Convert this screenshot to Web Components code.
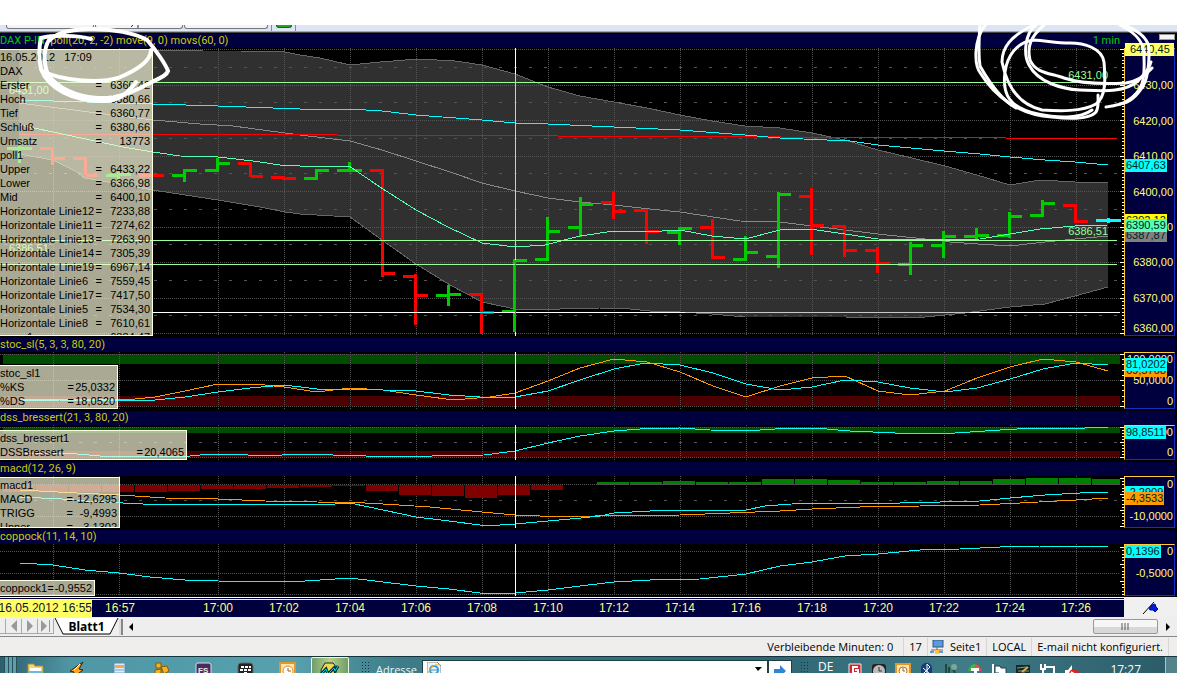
<!DOCTYPE html>
<html lang="de">
<head>
<meta charset="utf-8">
<title>DAX 1 min</title>
<style>
html, body {
  margin: 0;
  height: 100%;
  overflow: hidden;
  background: #fff;
  font-family: "Liberation Sans", Arial, sans-serif;
  font-size: 11px;
}
</style>
</head>
<body>
<trading-desk></trading-desk>

<script>
const CYAN = "#00ffff", ORANGE = "#ff9900", MINT = "#55ffb4", LIME = "#99ff99";

// x of the vertical grid lines
const GRID_X = [53, 119];
for (let x = 218; x < 1100; x += 66) GRID_X.push(x);

const hline = (y, style) => `<path class="${style}" d="M0 ${y + .5}H1120"/>`;
const poly = (color, pts) => `<polyline fill="none" stroke="${color}" points="${pts}"/>`;
const rect = (x, y, w, h, c) => `<rect x="${x}" y="${y}" width="${w}" height="${h}" fill="${c}"/>`;
const ticks = (from, to, count, major) => {
  let out = "";
  for (let i = 0; i <= count; i++) {
    const y = Math.round(from + (to - from) * i / count);
    const w = i % major ? 2 : 4;
    out += rect(1124 - w, y, w, 1, "#fff");
  }
  return out;
};
const grid = (top, bottom) => GRID_X.map(x => `<path class="dot" d="M${x + .5} ${top}V${bottom}"/>`).join("");

// x, high, low, open, close
const BARS = [
  ["g",20,146,163,148,148],["r",53,148,165,148,158],["r",86,157,175,158,175],["g",119,172,180,175,174],
  ["r",152,174,177,175,175],["g",185,169,182,175,170],["g",218,158,172,170,163],["r",251,162,177,163,176],
  ["r",284,176,180,177,178],["g",317,169,180,178,170],["g",350,162,172,170,170],["r",383,169,277,170,273],
  ["r",416,274,325,276,295],["g",449,285,306,295,294],["r",482,293,334,294,312],["g",515,259,332,311,260],
  ["g",548,217,261,259,231],["g",581,197,237,227,204],["r",614,191,219,202,211],["r",647,209,244,210,231],
  ["g",680,227,245,232,228],["r",713,219,259,227,257],["g",746,236,261,259,252],["g",779,192,268,256,194],
  ["r",812,188,255,196,225],["r",845,225,257,226,250],["r",878,247,273,250,263],["g",911,242,275,264,245],
  ["g",944,231,258,245,236],["g",977,228,240,236,235],["g",1010,212,238,235,216],["g",1043,200,217,215,203],
  ["r",1076,204,223,205,221],["c",1109,218,223,220,220]
];
const BAR_COLOR = { g: "#00cc00", r: "#ff0000", c: "#00ffff" };
const ohlc = BARS.map(([k, x, hi, lo, o, c]) =>
  rect(x - 2, hi, 3, lo - hi, BAR_COLOR[k]) +
  rect(x - 13, o - 1, 12, 3, BAR_COLOR[k]) +
  rect(x, c - 1, 12, 3, BAR_COLOR[k])).join("");

const UPPER = "19,49 153,50 203,51 240,51 285,52 300,55 320,58 350,65 380,62 418,59 455,61 482,65 515,74 548,87 580,96 614,102 647,108 680,115 712,121 745,126 780,128 812,133 845,140 878,150 912,158 945,166 977,175 1010,185 1040,180 1075,182 1108,182";
const LOWER = "1108,287 1075,296 1045,304 1010,307 965,313 945,315 925,317 895,318 845,317 745,317 712,314 680,312 650,311 620,308 600,308 560,309 515,309 482,302 450,285 416,264 382,240 350,217 300,214 285,212 260,207 218,200 185,195 153,190 85,178 77,172 53,160 19,154";

let histogram = "";
[492,492,492,492,492,491,489,489,488,487,486,491,495,496,498,495,490].forEach((y, i) => {
  histogram += rect(3 + i * 33, 485, 32, y - 485, "#800000");
});
[482,482,481,482,482,479,479,480,482,482,481,481,479,478,478,479].forEach((y, i) => {
  histogram += rect(597 + i * 33, y, i == 15 ? 28 : 32, 485 - y, "#008000");
});

const PLOTS = {
  price: {
    top: 48, height: 288,
    art: `<polygon fill="#303030" points="${UPPER} ${LOWER}"/>` + grid(48, 336) +
      [49,85,120,156,191,227,262,298,333].map(y => hline(y, "dot")).join("") +
      [67,102,138,173,209,244,280,315].map(y => hline(y, "dash")).join("") +
      poly("#666", UPPER) + poly("#666", LOWER) +
      poly("#888", "19,103 97,113 153,120 200,124 233,126 300,135 350,141 382,150 416,161 450,172 482,183 515,191 548,198 580,202 614,205 650,209 680,212 740,221 780,222 812,226 845,230 878,234 925,239 950,242 978,244 1010,246 1045,242 1075,239 1108,236") +
      ohlc +
      rect(153, 312, 967, 1, "#fff") + rect(685, 312, 285, 1, "#c8c8c8") + rect(480, 312, 14, 1, "#00ffff") +
      poly("#ff0000", "19,134 336,134 337,135 557,135 558,136 780,136 781,137 1005,137 1006,138 1117,138") +
      poly(CYAN, "19,100 153,104 218,106 300,109 350,109 382,111 416,115 482,120 515,123 548,124 614,127 680,130 745,135 780,138 850,141 878,145 944,151 980,154 1010,157 1045,160 1075,162 1108,165") +
      poly(MINT, "20,125 67,135 123,147 153,152 180,156 218,157 253,161 280,165 300,166 349,166 383,189 416,210 448,227 482,243 515,247 545,245 580,236 614,231 662,231 680,230 712,236 745,239 780,230 810,229 845,234 878,239 940,240 980,239 1010,234 1040,229 1075,226 1108,225") +
      rect(0, 82, 1117, 1, LIME) + rect(0, 240, 1117, 1, LIME) + rect(0, 264, 1117, 1, LIME) +
      rect(515, 48, 1, 288, "#fff") + rect(515, 74, 1, 185, "#ccc") + rect(515, 260, 1, 72, "#c3c") +
      ticks(49, 333, 80, 10)
  },
  stoc: {
    top: 352, height: 57,
    art: rect(3, 354, 1117, 10, "#004d00") + rect(3, 396, 1117, 10, "#4d0000") + grid(352, 409) +
      hline(354, "dot") + hline(380, "dot") + hline(406, "dot") +
      poly(ORANGE, "20,399 60,399 135,399 155,397 185,391 218,384 255,384 284,387 317,392 350,388 383,390 416,395 446,399 465,399 490,397 515,393 548,381 580,368 614,359 647,362 680,372 713,386 746,397 780,386 812,378 845,376 878,391 910,395 945,391 977,378 1010,367 1043,359 1076,362 1108,371") +
      poly(CYAN, "20,401 60,400 155,400 185,397 218,392 250,388 284,385 317,389 350,389 383,390 416,391 449,395 480,397 515,397 548,391 580,380 614,369 645,363 680,365 713,373 746,384 780,390 812,387 845,380 878,382 910,388 945,392 977,388 1010,379 1043,369 1076,363 1108,365") +
      rect(515, 352, 1, 57, "#fff") + ticks(354, 406, 10, 5)
  },
  dss: {
    top: 425, height: 35,
    art: rect(3, 427, 1117, 6, "#004d00") + rect(3, 451, 1117, 6, "#4d0000") + grid(425, 460) +
      hline(427, "dot") + hline(442, "dash") + hline(457, "dot") +
      poly(CYAN, "20,453 77,454 100,456 190,456 210,454 230,454 265,456 300,454 366,456 432,456 484,455 515,451 548,443 580,436 614,431 640,429 680,428 710,430 745,431 790,428 815,428 850,431 895,433 955,433 1000,430 1035,428 1085,428 1108,427") +
      rect(515, 425, 1, 35, "#fff") + ticks(427, 457, 10, 5)
  },
  macd: {
    top: 476, height: 52,
    art: grid(476, 528) + histogram + hline(484, "dot") + hline(500, "dash") + hline(516, "dot") +
      poly(ORANGE, "20,490 77,493 120,495 165,498 218,499 265,501 317,502 365,503 383,504 430,507 482,512 515,515 540,516 595,516 680,515 730,513 780,511 812,509 860,507 920,506 980,505 1020,503 1076,500 1108,498") +
      poly(CYAN, "20,497 62,499 85,501 123,503 143,504 335,504 350,503 383,510 416,517 449,521 480,525 500,525 515,524 548,521 581,518 600,516 614,513 650,511 680,510 746,510 765,506 805,503 900,503 980,501 1010,498 1045,495 1080,493 1108,492") +
      rect(515, 476, 1, 52, "#fff") + ticks(478, 526, 15, 5)
  },
  coppock: {
    top: 544, height: 52,
    art: grid(544, 596) + hline(551, "dot") + hline(573, "dot") + hline(594, "dot") +
      poly(CYAN, "20,563 53,565 85,570 119,573 150,577 185,580 218,581 290,582 350,578 383,582 416,586 449,589 480,593 515,593 548,590 580,586 614,582 650,580 700,579 746,574 780,566 812,562 845,556 878,554 920,550 960,549 1000,547 1040,546 1108,546") +
      rect(515, 544, 1, 52, "#fff") + ticks(547, 594, 14, 5)
  }
};

class PlotArea extends HTMLElement {
  connectedCallback() {
    const p = PLOTS[this.getAttribute("name")];
    this.attachShadow({ mode: "open" }).innerHTML = `
    <style>
      :host { display: block; position: relative; overflow: hidden; background: #000; min-width: 0; min-height: 0; }
      svg { display: block; width: 100%; height: 100%; shape-rendering: crispEdges; }
      .dot { stroke: #555; stroke-dasharray: 1 1; }
      .dash { stroke: #555; stroke-dasharray: 3 12; stroke-dashoffset: -4; }
    </style>
    <svg viewBox="0 ${p.top} 1124 ${p.height}" preserveAspectRatio="none" aria-hidden="true">${p.art}</svg>
    <slot></slot>`;
  }
}
customElements.define("plot-area", PlotArea);

// value read-out that floats over a plot
class DataBox extends HTMLElement {
  connectedCallback() {
    const rows = this.getAttribute("rows").split("|").map(row => {
      const [name, value] = row.split("=");
      return value
        ? `<tr><th scope="row">${name}</th><td>=</td><td class="val">${value}</td></tr>`
        : `<tr><th colspan="3">${name}</th></tr>`;
    }).join("");
    this.attachShadow({ mode: "open" }).innerHTML = `
    <style>
      :host {
        display: block; position: absolute; left: 0; bottom: 0; overflow: hidden; box-sizing: border-box;
        background: rgba(250, 250, 218, .68); color: #000;
        border: solid #ffffe4; border-width: 1px 1px 1px 0;
      }
      table { width: 100%; border-collapse: collapse; }
      th, td { padding: 0; height: 14px; line-height: 14px; font-weight: normal; text-align: left; white-space: pre; }
      th { width: 100%; }
      .val { text-align: right; padding-right: 2px; min-width: var(--val, 41px); }
    </style>
    <table>${rows}</table>`;
  }
}
customElements.define("data-box", DataBox);

class PriceTag extends HTMLElement {
  connectedCallback() {
    this.attachShadow({ mode: "open" }).innerHTML = `
    <style>
      :host {
        display: block; position: absolute; left: 0; height: 13px; line-height: 13px;
        padding: 0 1px; color: #002222; background: var(--tag, #00ffff); white-space: nowrap;
      }
    </style>
    <slot></slot>`;
  }
}
customElements.define("price-tag", PriceTag);

class PriceAxis extends HTMLElement {
  connectedCallback() {
    const marks = this.getAttribute("marks").split("|").map(m => `<span>${m}</span>`).join("");
    this.attachShadow({ mode: "open" }).innerHTML = `
    <style>
      :host {
        display: flex; position: relative; box-sizing: border-box; margin-right: 2px; background: #00003f;
        border: 1px solid #1030c8; border-top-color: #ffcc33; border-left-color: #ffcc33;
      }
      .scale { flex: 1; display: flex; flex-direction: column; justify-content: space-between; text-align: right; color: #ffff77; padding: var(--pad, 0); }
      span { display: block; line-height: 13px; padding-right: 1px; }
      :host([long]) .scale { padding-top: 19px; }
      :host([long]) span { display: flex; flex: 71; align-items: center; justify-content: flex-end; }
      :host([long]) span:last-child { flex: 38; align-items: flex-end; }
    </style>
    <div class="scale">${marks}</div>
    <slot></slot>`;
  }
}
customElements.define("price-axis", PriceAxis);

class ChartPane extends HTMLElement {
  connectedCallback() {
    this.attachShadow({ mode: "open" }).innerHTML = `
    <style>
      :host { display: grid; grid-template: 14px minmax(0, 1fr) / minmax(0, 1fr) 53px; background: #000; }
      header {
        grid-column: 1 / -1; display: flex; align-items: center; background: #00003f; color: #cccc00;
        margin-right: 2px; line-height: 14px; white-space: pre; font-family: Roboto, sans-serif;
      }
      header slot { display: contents; }
    </style>
    <header><slot name="title"></slot></header>
    <slot></slot>`;
  }
}
customElements.define("chart-pane", ChartPane);

class TimeAxis extends HTMLElement {
  connectedCallback() {
    let cells = "";
    for (let m = 0; m <= 26; m += 2) cells += `<span>17:${String(m).padStart(2, "0")}</span>`;
    this.attachShadow({ mode: "open" }).innerHTML = `
    <style>
      :host { display: grid; grid-template-columns: minmax(0, 1fr) 53px; height: 20px; background: #f0f0f0; font-size: 12px; }
      .times {
        display: grid; grid-template-columns: 92fr 56fr 37fr repeat(14, 66fr) 15fr;
        background: #00003f; color: #ffff77; border-top: 1px solid #fff; border-bottom: 1px solid #000; line-height: 17px;
      }
      span { border-top: 1px solid #ffff77; margin-top: 1px; text-align: center; white-space: nowrap; min-width: 0; }
      .date { background: #ffff66; color: #113; text-align: right; direction: rtl; overflow: hidden; }
      .date bdi { direction: ltr; }
      .pin { display: grid; place-items: center; }
    </style>
    <div class="times"><span class="date"><bdi>16.05.2012 16:55</bdi></span><span>16:57</span><span></span>${cells}<span></span></div>
    <div class="pin"><svg width="18" height="16" aria-hidden="true">
      <path d="M1 14L12 2M9 5l6 6" stroke="#000" fill="none"/>
      <path d="M10 5l3-1 1 3 2 2-3 3-2-2-3 0-1-2z" fill="#0018ee" stroke="#001080"/>
    </svg></div>`;
  }
}
customElements.define("time-axis", TimeAxis);

class ToolStrip extends HTMLElement {
  connectedCallback() {
    this.attachShadow({ mode: "open" }).innerHTML = `
    <style>
      :host { display: flex; height: 6px; background: #dde4f4; border-bottom: 1px solid #a9a9ad; box-shadow: 0 1px #444; padding-left: 6px; margin-bottom: 1px; overflow: hidden; }
      button { box-sizing: border-box; width: 88px; height: 4px; padding: 0; margin-right: 1px; background: #f4f4f4; border: 1px solid #777; border-top: 0; border-radius: 0 0 3px 3px; }
      button:nth-of-type(3) { width: 84px; }
      i { width: 1px; background: #889; margin: 0 4px 0 2px; }
      .go { width: 16px; height: 3px; border-color: #063; background: #1fa81f; }
      svg { display: block; margin-left: 34px; }
    </style>
    <button aria-label="Instrument"></button>
    <button aria-label="Typ"><svg width="12" height="3"><path d="M1 2l2-2M8 0v3" stroke="#333"/></svg></button>
    <button aria-label="Periode"></button>
    <i></i><button class="go" aria-label="Start"></button><i></i>`;
  }
}
customElements.define("tool-strip", ToolStrip);

class SheetTabs extends HTMLElement {
  connectedCallback() {
    this.attachShadow({ mode: "open" }).innerHTML = `
    <style>
      :host { display: flex; align-items: center; height: 20px; background: #eeeeee; border-bottom: 1px solid #888; box-sizing: border-box; font-family: "Noto Sans", "Open Sans", sans-serif; }
      button { font: inherit; padding: 0; border: 0; background: none; color: #222; }
      .nav { width: 16px; height: 15px; border-right: 1px solid #aaa; border-bottom: 1px solid #aaa; }
      .nav.first { width: 6px; }
      .nav svg { display: block; margin: auto; fill: #999; }
      .tab { position: relative; width: 65px; height: 18px; font-size: 12px; font-weight: bold; line-height: 16px; color: #000; }
      .tab svg { position: absolute; left: 0; top: 0; }
      .tab span { position: relative; }
      .split { width: 2px; height: 16px; background: #ddd; border-right: 2px solid #888; }
      .arrow { width: 16px; height: 16px; }
      .arrow svg { display: block; margin: auto; }
      .track { flex: 1; display: flex; justify-content: flex-end; background: #eeeeee; }
      .thumb { width: 65px; height: 15px; border: 1px solid #999; border-radius: 2px; background: linear-gradient(#f6f6f6 50%, #d8d8d8 50%); }
      .thumb svg { display: block; margin: auto; }
    </style>
    <button class="nav first" aria-label="Erstes Blatt"></button>
    <button class="nav" aria-label="Zurück"><svg width="8" height="12"><path d="M7 0v12L1 6z"/></svg></button>
    <button class="nav" aria-label="Weiter"><svg width="8" height="12"><path d="M1 0v12l6-6z"/></svg></button>
    <button class="nav" aria-label="Letztes Blatt"><svg width="10" height="12"><path d="M0 0v12l6-6zM8 0h1v12H8z"/></svg></button>
    <button class="tab"><svg width="65" height="18"><path d="M0 0h64l-8 16H9z" fill="#fff"/><path d="M1 0l8 16h47l8-16" fill="none" stroke="#000"/></svg><span>Blatt1</span></button>
    <div class="split"></div>
    <button class="arrow" aria-label="Nach links"><svg width="5" height="8"><path d="M4 0v8L0 4z"/></svg></button>
    <div class="track"><button class="thumb" aria-label="Bildlauf"><svg width="9" height="7"><path d="M1 0v7M4 0v7M7 0v7" stroke="#555"/></svg></button></div>
    <button class="arrow" style="width: 19px" aria-label="Nach rechts"><svg width="5" height="8"><path d="M1 0v8l4-4z"/></svg></button>`;
  }
}
customElements.define("sheet-tabs", SheetTabs);

class StatusBar extends HTMLElement {
  connectedCallback() {
    this.attachShadow({ mode: "open" }).innerHTML = `
    <style>
      :host {
        display: flex; justify-content: flex-end; align-items: center; height: 19px; padding-right: 8px;
        background: #f0eeed; color: #000; font: 11px/18px "Open Sans", "Noto Sans", sans-serif; white-space: nowrap;
      }
      span { padding: 0 5px; border-right: 1px solid #d8d6d5; }
      .wide { padding-right: 10px; }
      svg { display: block; margin: 0 1px 0 2px; }
    </style>
    <span class="wide">Verbleibende Minuten: 0</span><span>17</span>
    <svg width="14" height="14" aria-hidden="true"><rect x="3" y="0" width="10" height="7" fill="#5a9ae0" stroke="#357"/><path d="M1 10h12M7 7v4" stroke="#667"/><path d="M0 11h4v2H0zM9 11h4v2H9z" fill="#5a9ae0"/><path d="M5 10h4v4H5z" fill="#ffc629"/></svg>
    <span>Seite1</span><span>LOCAL</span><span>E-mail nicht konfiguriert.</span>`;
  }
}
customElements.define("status-bar", StatusBar);

const APPS = [
  ["Explorer", '<path d="M2 2h6l1 2h8v16H2z" fill="#f0d87a" stroke="#a98b2c"/><path d="M4 6h11v3H4z" fill="#fff"/><path d="M3 9h13v11H3z" fill="#68b8e8"/>'],
  ["Winamp", '<path d="M15 0L2 9l4 1-3 7 12-9-4-1z" fill="#ffa51f" stroke="#222"/><path d="M12 2L6 8" stroke="#fff"/>'],
  ["Rechner", '<path d="M4 1h11v18H4z" fill="#dcefff" stroke="#568bb5"/><path d="M5 3h9v3H5z" fill="#f7a94a"/><path d="M5 8h9M5 11h9" stroke="#6fa7d5"/>'],
  ["Netzwerk", '<path d="M4 1h5v5H4zM9 5l6-1 2 5-5 3zM3 8l6-1v6l-6 2z" fill="#f3b123" stroke="#8b5b05"/>'],
  ["FS", '<rect x="2" y="1" width="15" height="18" rx="2" fill="#4b2a63" stroke="#ddd"/><text x="4" y="11" fill="#eee" font-size="8" font-weight="bold">FS</text>'],
  ["BlackBerry", '<rect x="2" y="1" width="15" height="18" rx="3" fill="#222" stroke="#666"/><path d="M5 5h3M9 5h3M13 5h2M4 8h3M8 8h3M12 8h3M8 11h3" stroke="#fff" stroke-width="2"/>'],
  ["Outlook", '<path d="M2 1h15v18H2z" fill="#ffe6ad" stroke="#e6942c" stroke-width="2"/><circle cx="10" cy="9" r="5" fill="#fff" stroke="#d88b2c"/><path d="M10 6v3h3" stroke="#a65c15" fill="none"/>'],
  ["Chart", '<path d="M5 1h8l4 5-3 12H2L1 8z" fill="#e4dc55" stroke="#222"/><path d="M1 12l5-5 2 5 6-6 1 3 3-5" stroke="#003040" stroke-width="3" fill="none"/><path d="M1 12l5-5 2 5 6-6 1 3 3-5" stroke="#00d8e8" fill="none"/>']
];
const TRAY = [
  ["Virenschutz", '<path d="M2 1h12v9l-6 5-6-5z" fill="#d5232c" stroke="#eee"/><path d="M11 4H6v6h5V7H8" fill="none" stroke="#fff" stroke-width="2"/>'],
  ["Uhr", '<rect x="1" y="1" width="14" height="14" rx="3" fill="#222"/><circle cx="8" cy="8" r="6" fill="#bbb"/><path d="M8 4v4h3" stroke="#333" fill="none"/>'],
  ["Outlook", '<path d="M1 1h14v14H1z" fill="#ffe6ad" stroke="#e6942c" stroke-width="2"/><circle cx="8" cy="8" r="4" fill="#fff" stroke="#b96d1a"/><path d="M8 5v3h2" stroke="#a65c15" fill="none"/>'],
  ["Bluetooth", '<rect x="2" width="11" height="16" rx="5" fill="#173c7c"/><path d="M4 5l7 6-3 3V1l3 3-7 7" stroke="#fff" fill="none"/>'],
  ["Kabel", '<path d="M3 1v14M6 4v11M9 3l4 10" stroke="#214836" stroke-width="2"/><circle cx="11" cy="4" r="3" fill="#7ca892"/>'],
  ["Schirm", '<path d="M1 8q7-14 14 0z" fill="#ef4e34"/><path d="M1 8q2-7 7-7v7z" fill="#3bb54a"/><path d="M4 5h8v3H10v8H7V8H4z" fill="#fff"/>'],
  ["Wartung", '<path d="M2 1v15" stroke="#fff" stroke-width="2"/><path d="M4 3h5l1 2h5v7H9L8 10H4z" stroke="#1c4650" fill="#fff"/>'],
  ["Monitor", '<path d="M1 2h14v13H1z" fill="#222"/><path d="M2 5l10-1M3 8h11M2 11l8-1" stroke="#40b8a0"/><path d="M7 9l6-5" stroke="#eda83b" stroke-width="2"/>'],
  ["Netz", '<path d="M5 4h10v8H8M2 1v5h4V1M4 6v9" fill="none" stroke="#fff" stroke-width="2"/>'],
  ["Ton", '<path d="M2 7h3l4-5v13l-4-4H2z" fill="#fff"/><circle cx="11" cy="11" r="5" fill="#df2020"/><path d="M8 9l6 4" stroke="#fff" stroke-width="2"/>']
];

class TaskBar extends HTMLElement {
  connectedCallback() {
    const apps = APPS.map(([n, art], i) => `<button class="app${i == 7 ? " active" : ""}" aria-label="${n}"><svg width="20" height="20">${art}</svg></button>`).join("");
    const tray = TRAY.map(([n, art]) => `<button aria-label="${n}"><svg width="16" height="16">${art}</svg></button>`).join("");
    this.attachShadow({ mode: "open" }).innerHTML = `
    <style>
      :host {
        display: flex; align-items: flex-start; height: 16px; overflow: hidden; padding-left: 4px;
        background: linear-gradient(90deg, #2d5f6b, #4f97a5 6%, #57a0ae 25%, #3d7d89 34%, #2f6773 65%, #3f7c88 82%, #2a5a66);
        border-top: 1px solid #16323a; color: #fff; font-family: "Open Sans", "Noto Sans", sans-serif; white-space: nowrap;
      }
      button { padding: 0; border: 0; background: none; }
      svg { display: block; margin: auto; }
      .edge { width: 13px; height: 20px; background: repeating-linear-gradient(90deg, #28505a 0 1px, #5d9faa 1px 4px); box-sizing: border-box; }
      .app { width: 38px; margin-right: 4px; height: 34px; padding-top: 5px; }
      .app svg { margin: 0 auto 10px; }
      .active { border: 1px solid #eef6d8; padding-top: 4px; border-radius: 2px; background: linear-gradient(90deg, #6f9d6d, #b8cf86 50%, #6f9d6d); }
      .grip { width: 9px; height: 14px; margin: 4px 3px 0 8px; background: radial-gradient(#17343b 1px, transparent 1px) 0 0 / 3px 3px; }
      label { font-size: 11px; line-height: 16px; padding: 5px 5px 0 3px; color: #eef7f8; }
      .address { flex: 1; display: flex; height: 28px; margin-top: 3px; background: #fff; border: 1px solid #213f47; box-sizing: border-box; }
      .address svg { margin: 1px 4px; }
      input { flex: 1; min-width: 0; height: 20px; border: 0; padding: 0; outline: 0; background: transparent; }
      .drop, .open { height: 16px; width: 18px; }
      .drop svg { margin: 5px auto; }
      .open { width: 24px; height: 28px; margin-top: 3px; background: #fff; border: 1px solid #213f47; }
      .open svg { margin: 1px auto 8px; }
      .lang { font: 12px/16px "Open Sans", "Noto Sans", sans-serif; color: #fff; padding: 2px 14px 0 6px; }
      .tray { display: flex; gap: 8px; padding: 6px 31px 0 0; }
      time { font-size: 12px; line-height: 16px; padding: 5px 24px 0 0; }
      .desk { width: 12px; height: 30px; border-left: 1px solid #a9c7cc; background: #55838c; }
    </style>
    <div class="edge"></div>${apps}
    <div class="grip"></div><label for="url">Adresse</label>
    <div class="address"><svg width="14" height="14"><path d="M0 0h10l4 4v10H0z" fill="#eef4fb" stroke="#888"/><circle cx="7" cy="8" r="4" fill="none" stroke="#2f9be0" stroke-width="2"/><path d="M3 8h8" stroke="#2f9be0"/><path d="M1 11Q5 1 13 3" stroke="#f2b21c" fill="none"/></svg>
      <input id="url" type="text"><button class="drop" aria-label="Verlauf"><svg width="7" height="4"><path d="M0 0h7L3 4z"/></svg></button></div>
    <button class="open" aria-label="Wechseln zu"><svg width="14" height="14"><path d="M1 5h6V1l6 6-6 6V9H1z" fill="#2f86d6"/></svg></button>
    <div class="grip"></div><button class="lang">DE</button>
    <div class="tray">${tray}</div><time>17:27</time><button class="desk" aria-label="Desktop"></button>`;
  }
}
customElements.define("task-bar", TaskBar);

// freehand rings laid over the chart corners
class PenMarks extends HTMLElement {
  connectedCallback() {
    const left = `
      <path d="M91 39C78 35 53 35 41 38C39 47 39 60 41 69C48 88 72 101 103 101C119 101 127 94 136 82"/>
      <path d="M49 41C56 33 67 30 88 29C112 28 137 34 147 40C156 50 166 65 168 71C166 77 157 79 148 84C133 92 117 99 98 98C75 97 57 87 48 75C43 62 44 48 49 40"/>
      <path d="M151 50C151 61 135 71 118 78C101 83 65 82 42 71"/>`;
    const right = `
      <path d="M986 24C973 40 974 66 981 74C994 95 1018 115 1052 117C1070 119 1090 119 1096 112C1099 107 1098 102 1098 95"/>
      <path d="M980 24C979 37 978 52 980 66C989 82 1000 99 1016 108"/>
      <path d="M1034 25C1010 36 1002 48 1002 62C1007 87 1020 105 1042 110C1059 111 1082 112 1096 104C1107 96 1105 76 1104 62C1102 48 1084 43 1070 43C1057 43 1048 41 1034 40C1016 42 1007 57 1005 72C1002 94 1009 108 1038 114C1057 118 1080 119 1092 110"/>
      <path d="M1036 25C1025 33 1023 54 1029 65C1038 82 1061 89 1080 90C1105 91 1123 93 1138 81C1144 74 1149 70 1151 62"/>
      <path d="M1044 25C1030 37 1027 47 1030 60C1036 74 1051 73 1064 78C1081 84 1107 84 1126 83C1139 81 1146 75 1152 68"/>
      <path d="M1120 25C1138 34 1145 44 1144 57C1145 80 1143 91 1127 101C1121 105 1113 106 1106 107"/>
      <path d="M1124 25C1137 30 1147 38 1149 47C1149 56 1150 74 1143 86C1137 96 1129 103 1120 104"/>`;
    this.attachShadow({ mode: "open" }).innerHTML = `
    <style>
      :host { display: flex; justify-content: space-between; position: absolute; inset: 25px 0 auto 0; pointer-events: none; }
      svg { fill: none; stroke: #fff; stroke-width: 4; stroke-linecap: round; }
      svg:last-child { stroke-width: 3; }
    </style>
    <svg width="180" height="95" viewBox="0 25 180 95" aria-hidden="true">${left}</svg>
    <svg width="217" height="100" viewBox="960 25 217 100" aria-hidden="true">${right}</svg>`;
  }
}
customElements.define("pen-marks", PenMarks);

class TradingDesk extends HTMLElement {
  connectedCallback() {
    this.attachShadow({ mode: "open" }).innerHTML = `
    <style>
      :host { display: flex; flex-direction: column; position: relative; height: 100vh; box-sizing: border-box; padding-top: 25px; overflow: hidden; }
      .charts { flex: 1; min-height: 0; display: flex; flex-direction: column; gap: 2px; background: #000; padding: 1px 0; }
      .main { flex: 1; min-height: 0; }
      .stoc { height: 71px; }
      .dss { height: 49px; }
      .macd, .cop { height: 66px; }
      .sym { color: #00cc00; }
      .min { color: #00cc00; margin-left: auto; }
      .fold { width: 16px; height: 6px; margin: 0 0 8px 39px; padding: 0; border: 1px solid #999; background: #f4f4f4; }
      .level { position: absolute; color: #99ff99; line-height: 14px; }
      .level.l { left: 9px; }
      .level.r { right: 16px; }
    </style>
    <tool-strip></tool-strip>
    <div class="charts">
      <chart-pane class="main">
        <span slot="title" class="sym">DAX P-IN.</span><span slot="title"> poll(20, 2, -2) move(9, 0) movs(60, 0)</span>
        <span slot="title" class="min">1 min</span><button slot="title" class="fold" aria-label="Minimieren"></button>
        <plot-area name="price">
          <span class="level l" style="top: 12%">6431,00</span><span class="level r" style="top: 7%">6431,00</span>
          <span class="level l" style="top: 67%">6386,51</span><span class="level r" style="top: 61%">6386,51</span>
          <data-box style="width: 153px; height: 287px; --val: 48px" rows="16.05.2012   17:09|DAX|Erster=6360,42|Hoch=6380,66|Tief=6360,77|Schluß=6380,66|Umsatz=13773|poll1|Upper=6433,22|Lower=6366,98|Mid=6400,10|Horizontale Linie12=7233,88|Horizontale Linie11=7274,62|Horizontale Linie13=7263,90|Horizontale Linie14=7305,39|Horizontale Linie19=6967,14|Horizontale Linie6=7559,45|Horizontale Linie17=7417,50|Horizontale Linie5=7534,30|Horizontale Linie8=7610,61|move1=6384,47"></data-box>
        </plot-area>
        <price-axis long marks="6430,00|6420,00|6410,00|6400,00|6390,00|6380,00|6370,00|6360,00">
          <price-tag style="top: -6px; right: 0; padding-left: 5px; --tag: #ffff66">6440,45</price-tag>
          <price-tag style="top: 110px">6407,63</price-tag>
          <price-tag style="top: 165px; --tag: #ffff00">6392,12</price-tag>
          <price-tag style="top: 180px; --tag: #808080">6387,87</price-tag>
          <price-tag style="top: 170px; --tag: #55ffb4">6390,59</price-tag>
        </price-axis>
      </chart-pane>
      <chart-pane class="stoc">
        <span slot="title">stoc_sl(5, 3, 3, 80, 20)</span>
        <plot-area name="stoc"><data-box style="width: 118px" rows="stoc_sl1|%KS=25,0332|%DS=18,0520"></data-box></plot-area>
        <price-axis marks="100,0000|50,0000|0">
          <price-tag style="top: 11px; --tag: #ff9900">69,5768</price-tag>
          <price-tag style="top: 5px">81,0202</price-tag>
        </price-axis>
      </chart-pane>
      <chart-pane class="dss">
        <span slot="title">dss_bressert(21, 3, 80, 20)</span>
        <plot-area name="dss"><data-box style="width: 187px" rows="dss_bressert1|DSSBressert=20,4065"></data-box></plot-area>
        <price-axis marks="100,0000|0"><price-tag style="top: 0">98,8511</price-tag></price-axis>
      </chart-pane>
      <chart-pane class="macd">
        <span slot="title">macd(12, 26, 9)</span>
        <plot-area name="macd"><data-box style="width: 120px; height: 51px; --val: 44px" rows="macd1|MACD=-12,6295|TRIGG=-9,4993|Upper=-3,1302"></data-box></plot-area>
        <price-axis style="--pad: 1px 0 4px" marks="0|-10,0000">
          <price-tag style="top: 9px">-2,2909</price-tag>
          <price-tag style="top: 15px; --tag: #ff9900">-4,3533</price-tag>
        </price-axis>
      </chart-pane>
      <chart-pane class="cop">
        <span slot="title">coppock(11, 14, 10)</span>
        <plot-area name="coppock"><data-box style="width: 95px; --val: 38px" rows="coppock1=-0,9552"></data-box></plot-area>
        <price-axis style="--pad: 0 0 15px" marks="0|-0,5000"><price-tag style="top: 0">0,1396</price-tag></price-axis>
      </chart-pane>
    </div>
    <time-axis></time-axis>
    <sheet-tabs></sheet-tabs>
    <status-bar></status-bar>
    <task-bar></task-bar>
    <pen-marks></pen-marks>`;
  }
}
customElements.define("trading-desk", TradingDesk);
</script>
</body>
</html>
